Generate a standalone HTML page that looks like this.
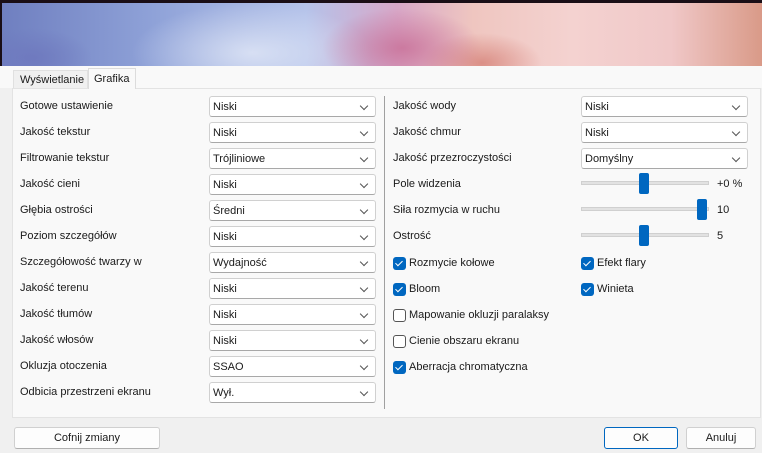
<!DOCTYPE html>
<html><head><meta charset="utf-8"><style>
*{box-sizing:border-box;margin:0;padding:0}
body{width:762px;height:453px;overflow:hidden;background:#f0f0f0;font-family:"Liberation Sans",sans-serif;font-size:11px;color:#1a1a1a;position:relative}
.hdr{position:absolute;left:0;top:0;width:762px;height:66px;background:#1a0e16}
.img{position:absolute;left:2px;top:3px;width:760px;height:63px;
background:
radial-gradient(ellipse 80px 40px at 400px 45px,rgba(200,110,150,.8),transparent),
radial-gradient(ellipse 60px 30px at 480px 60px,rgba(210,120,110,.7),transparent),
radial-gradient(ellipse 120px 50px at 250px 50px,rgba(235,240,250,.7),transparent),
radial-gradient(ellipse 60px 30px at 30px 55px,rgba(110,120,190,.9),transparent),
linear-gradient(90deg,#6f7fc0 0%,#8fa2d8 20%,#b5c3ea 40%,#d8a8c8 52%,#efc6c0 62%,#f4d2d0 75%,#f0c8c8 88%,#d99a88 100%)}
.tabbar{position:absolute;left:0;top:66px;width:762px;height:22px;background:#f9f9f9}
.tab{position:absolute;top:70px;height:18px;line-height:18px;padding:0 0 0 6px}
.t1{left:13px;width:75px;background:#f0f0f0;border:1px solid #e0e0e0;border-bottom:none}
.t2{left:88px;top:68px;height:21px;width:48px;line-height:20px;padding-left:5px;background:#f9f9f9;border:1px solid #dcdcdc;border-bottom:none;z-index:2}
.panel{position:absolute;left:12px;top:88px;width:749px;height:330px;background:#f9f9f9;border:1px solid #e3e3e3}
.div{position:absolute;left:384px;top:96px;width:1px;height:313px;background:#a0a0a0}
.lbl{position:absolute;line-height:14px}
.cb{position:absolute;width:167px;height:21px;background:#fff;border:1px solid #d0d0d0;border-bottom-color:#a8a8a8;border-radius:3px;padding-left:3px;line-height:21px}
.cb:after{content:"";position:absolute;right:8px;top:6px;width:5px;height:5px;border-right:1px solid #555;border-bottom:1px solid #555;transform:rotate(45deg)}
.track{position:absolute;left:581px;width:128px;height:4px;background:#e2e2e2;border:1px solid #d0d0d0}
.thumb{position:absolute;width:10px;height:21px;background:#0067c0;border-radius:2px}
.chk{position:absolute;width:13px;height:13px;border-radius:3px}
.on{background:#0067c0}
.on:after{content:"";position:absolute;left:4px;top:2px;width:3px;height:6px;border-right:1.4px solid #fff;border-bottom:1.4px solid #fff;transform:rotate(45deg)}
.off{border:1px solid #555;background:#fff}
.btn{position:absolute;top:427px;height:22px;background:#fdfdfd;border:1px solid #d0d0d0;border-bottom-color:#b0b0b0;border-radius:3px;text-align:center;line-height:20px}
</style></head><body>
<div class="hdr"><div class="img"></div></div>
<div class="tabbar"></div>
<div class="tab t1">Wyświetlanie</div>
<div class="tab t2">Grafika</div>
<div class="panel"></div>
<div class="div"></div>

<div class="lbl" style="left:20px;top:99px">Gotowe ustawienie</div><div class="cb" style="left:209px;top:96px">Niski</div>
<div class="lbl" style="left:20px;top:125px">Jakość tekstur</div><div class="cb" style="left:209px;top:122px">Niski</div>
<div class="lbl" style="left:20px;top:151px">Filtrowanie tekstur</div><div class="cb" style="left:209px;top:148px">Trójliniowe</div>
<div class="lbl" style="left:20px;top:177px">Jakość cieni</div><div class="cb" style="left:209px;top:174px">Niski</div>
<div class="lbl" style="left:20px;top:203px">Głębia ostrości</div><div class="cb" style="left:209px;top:200px">Średni</div>
<div class="lbl" style="left:20px;top:229px">Poziom szczegółów</div><div class="cb" style="left:209px;top:226px">Niski</div>
<div class="lbl" style="left:20px;top:255px">Szczegółowość twarzy w</div><div class="cb" style="left:209px;top:252px">Wydajność</div>
<div class="lbl" style="left:20px;top:281px">Jakość terenu</div><div class="cb" style="left:209px;top:278px">Niski</div>
<div class="lbl" style="left:20px;top:307px">Jakość tłumów</div><div class="cb" style="left:209px;top:304px">Niski</div>
<div class="lbl" style="left:20px;top:333px">Jakość włosów</div><div class="cb" style="left:209px;top:330px">Niski</div>
<div class="lbl" style="left:20px;top:359px">Okluzja otoczenia</div><div class="cb" style="left:209px;top:356px">SSAO</div>
<div class="lbl" style="left:20px;top:385px">Odbicia przestrzeni ekranu</div><div class="cb" style="left:209px;top:382px">Wył.</div>

<div class="lbl" style="left:393px;top:99px">Jakość wody</div><div class="cb" style="left:581px;top:96px">Niski</div>
<div class="lbl" style="left:393px;top:125px">Jakość chmur</div><div class="cb" style="left:581px;top:122px">Niski</div>
<div class="lbl" style="left:393px;top:151px">Jakość przezroczystości</div><div class="cb" style="left:581px;top:148px">Domyślny</div>

<div class="lbl" style="left:393px;top:177px">Pole widzenia</div><div class="track" style="top:181px"></div><div class="thumb" style="left:639px;top:173px"></div><div class="lbl" style="left:717px;top:177px">+0 %</div>
<div class="lbl" style="left:393px;top:203px">Siła rozmycia w ruchu</div><div class="track" style="top:207px"></div><div class="thumb" style="left:697px;top:199px"></div><div class="lbl" style="left:717px;top:203px">10</div>
<div class="lbl" style="left:393px;top:229px">Ostrość</div><div class="track" style="top:233px"></div><div class="thumb" style="left:639px;top:225px"></div><div class="lbl" style="left:717px;top:229px">5</div>

<div class="chk on" style="left:393px;top:257px"></div><div class="lbl" style="left:409px;top:256px">Rozmycie kołowe</div>
<div class="chk on" style="left:581px;top:257px"></div><div class="lbl" style="left:597px;top:256px">Efekt flary</div>
<div class="chk on" style="left:393px;top:283px"></div><div class="lbl" style="left:409px;top:282px">Bloom</div>
<div class="chk on" style="left:581px;top:283px"></div><div class="lbl" style="left:597px;top:282px">Winieta</div>
<div class="chk off" style="left:393px;top:309px"></div><div class="lbl" style="left:409px;top:308px">Mapowanie okluzji paralaksy</div>
<div class="chk off" style="left:393px;top:335px"></div><div class="lbl" style="left:409px;top:334px">Cienie obszaru ekranu</div>
<div class="chk on" style="left:393px;top:361px"></div><div class="lbl" style="left:409px;top:360px">Aberracja chromatyczna</div>

<div class="btn" style="left:14px;width:146px">Cofnij zmiany</div>
<div class="btn" style="left:604px;width:74px;border-color:#0067c0">OK</div>
<div class="btn" style="left:686px;width:70px">Anuluj</div>
</body></html>
